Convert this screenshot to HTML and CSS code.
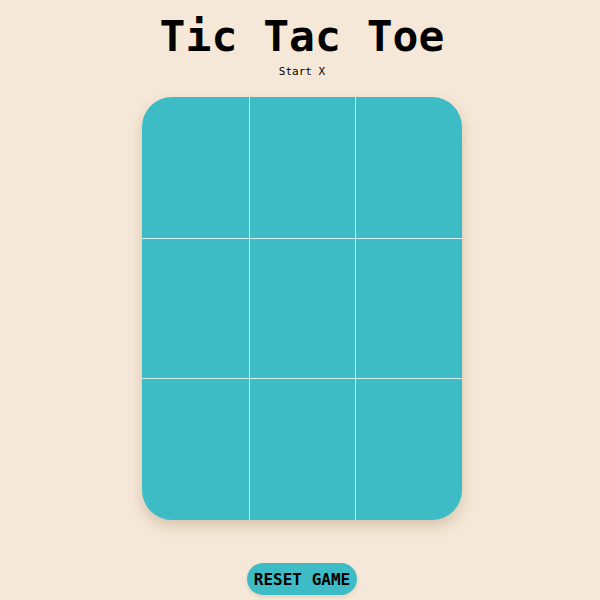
FILE: index.html
```html
<!DOCTYPE html>
<html>
<head>
<meta charset="utf-8">
<link rel="stylesheet" href="styles.css">
</head>
<body>
<main class="game">
  <h1 class="title">Tic Tac Toe</h1>
  <p class="status">Start X</p>
  <div class="board">
    <div class="cell"></div><div class="cell"></div><div class="cell"></div>
    <div class="cell"></div><div class="cell"></div><div class="cell"></div>
    <div class="cell"></div><div class="cell"></div><div class="cell"></div>
  </div>
  <button class="reset">RESET GAME</button>
</main>
</body>
</html>
```
FILE: styles.css
```css
html, body {
  margin: 0;
  padding: 0;
  background: #f6e8d8;
  height: 100%;
  overflow: hidden;
}
.game {
  display: flex;
  flex-direction: column;
  align-items: center;
  padding-left: 4px;
  font-family: "DejaVu Sans Mono", "Liberation Mono", monospace;
  color: #000;
}
.title {
  margin: 12px 0 0;
  font-size: 43px;
  font-weight: bold;
  line-height: 49px;
}
.status {
  margin: 4px 0 0;
  font-size: 11px;
  line-height: 13px;
}
.board {
  margin-top: 19px;
  width: 320px;
  height: 423px;
  background: #3dbcc6;
  border-radius: 30px;
  overflow: hidden;
  display: grid;
  grid-template-columns: 108px 106px 106px;
  grid-template-rows: 142px 140px 141px;
  box-shadow: 0 6px 14px rgba(120, 90, 50, 0.25);
}
.cell {
  border-right: 1px solid #b6f2f5;
  border-bottom: 1px solid #d4f1f1;
}
.cell:nth-child(3n) { border-right: none; }
.cell:nth-child(n+7) { border-bottom: none; }
.reset {
  margin-top: 43px;
  width: 110px;
  height: 32px;
  border: none;
  border-radius: 16px;
  background: #3dbcc6;
  font-family: "DejaVu Sans Mono", "Liberation Mono", monospace;
  font-weight: bold;
  font-size: 16px;
  color: #000;
  padding: 0;
  box-shadow: 0 2px 4px rgba(120, 90, 50, 0.15);
}
```
